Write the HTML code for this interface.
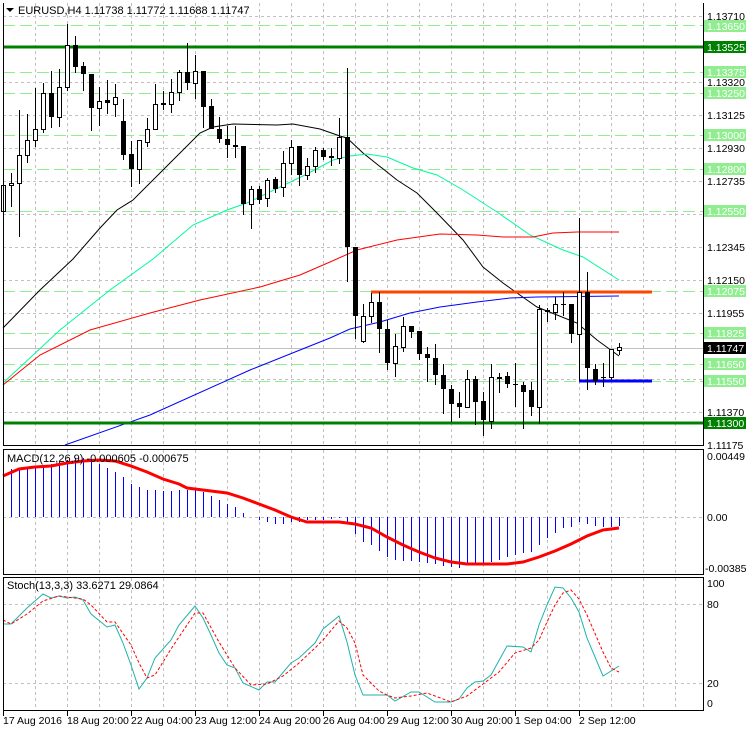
<!DOCTYPE html>
<html><head><meta charset="utf-8"><style>
html,body{margin:0;padding:0;background:#fff;}
svg{display:block;font-family:"Liberation Sans",sans-serif;font-size:11px;}
</style></head><body>
<svg width="746" height="731" viewBox="0 0 746 731" xmlns="http://www.w3.org/2000/svg">
<rect width="746" height="731" fill="#fff"/>
<!-- vertical grid -->
<g stroke="#c0c0c0" stroke-dasharray="3,3" stroke-width="1">
<path d="M35.5 3V445M67.5 3V445M99.5 3V445M131.5 3V445M163.5 3V445M195.5 3V445M227.5 3V445M259.5 3V445M291.5 3V445M323.5 3V445M355.5 3V445M387.5 3V445M419.5 3V445M451.5 3V445M483.5 3V445M515.5 3V445M547.5 3V445M579.5 3V445M611.5 3V445M643.5 3V445M675.5 3V445"/>
<path d="M35.5 450V574M67.5 450V574M99.5 450V574M131.5 450V574M163.5 450V574M195.5 450V574M227.5 450V574M259.5 450V574M291.5 450V574M323.5 450V574M355.5 450V574M387.5 450V574M419.5 450V574M451.5 450V574M483.5 450V574M515.5 450V574M547.5 450V574M579.5 450V574M611.5 450V574M643.5 450V574M675.5 450V574"/>
<path d="M35.5 578V710M67.5 578V710M99.5 578V710M131.5 578V710M163.5 578V710M195.5 578V710M227.5 578V710M259.5 578V710M291.5 578V710M323.5 578V710M355.5 578V710M387.5 578V710M419.5 578V710M451.5 578V710M483.5 578V710M515.5 578V710M547.5 578V710M579.5 578V710M611.5 578V710M643.5 578V710M675.5 578V710"/>
<path d="M3 16.5H703M3 82.5H703M3 115.5H703M3 148.5H703M3 181.5H703M3 214.5H703M3 247.5H703M3 280.5H703M3 313.5H703M3 379.5H703M3 412.5H703"/>
<path d="M3 517.5H703M3 604.5H703M3 683.5H703"/>
</g>
<!-- green dashed levels -->
<g stroke="#90ee90" stroke-dasharray="12,5" stroke-width="1">
<path d="M3 25.5H703M3 72.5H703M3 93.5H703M3 135.5H703M3 169.5H703M3 211.5H703M3 291.5H703M3 333.5H703M3 364.5H703M3 381.5H703"/>
</g>
<line x1="3" y1="348.5" x2="703" y2="348.5" stroke="#c0c0c0"/>
<!-- MAs -->
<g fill="none" stroke-width="1">
<polyline stroke="#000" points="3,328 40,290 73,259 100,228 117,210 133,200 163,170 200,133 213,127 233,124 277,125 293,124 320,129 340,136 347,138 363,153 397,180 417,193 437,213 463,240 483,267 503,283 517,293 537,307 557,315 577,323 597,340 619,356"/>
<polyline stroke="#00fa9a" points="3,383 60,330 110,290 153,259 193,225 227,210 247,203 280,187 307,174 333,160 350,156 367,154 387,157 413,168 437,175 463,190 497,212 530,235 563,250 583,257 619,280"/>
<polyline stroke="#ff0000" points="3,385 40,355 90,330 150,313 200,300 260,287 300,275 330,262 357,250 397,240 440,234 477,235 503,237 533,237 553,233 577,232 619,232"/>
<polyline stroke="#0000ff" points="65,445 150,415 250,370 300,350 330,338 350,329 380,322 410,313 440,307 477,302 510,298 537,297 619,296"/>
</g>
<!-- horizontal thick lines -->
<rect x="3" y="45.5" width="700" height="3" fill="#008000"/>
<rect x="3" y="421.5" width="700" height="3" fill="#008000"/>
<rect x="371" y="290.5" width="281" height="3" fill="#ff4500"/>
<rect x="579" y="379.5" width="73" height="3" fill="#0000ff"/>
<!-- candles -->
<g stroke="#000" stroke-width="1">
<path d="M3.5 171V216M11.5 173V207M19.5 110V237M27.5 114V163M35.5 88V147M43.5 83V133M51.5 71V128M59.5 69V127M67.5 24V91M75.5 36V73M83.5 62V91M91.5 74V131M99.5 87V126M107.5 80V114M115.5 84V117M123.5 99V160M131.5 141V187M139.5 140V184M147.5 118V147M155.5 84V130M163.5 91V110M171.5 79V113M179.5 70V101M187.5 43V90M195.5 55V99M203.5 71V128M211.5 99V129M219.5 117V143M227.5 126V158M235.5 126V158M243.5 146V215M251.5 186V229M259.5 186V204M267.5 178V207M275.5 177V193M283.5 151V197M291.5 140V175M299.5 146V186M307.5 158V180M315.5 147V173M323.5 148V160M331.5 148V166M339.5 118V164M347.5 68V282M355.5 247V339M363.5 304V343M371.5 293V323M379.5 292V353M387.5 320V370M395.5 334V377M403.5 317V352M411.5 326V338M419.5 331V360M427.5 347V382M435.5 344V385M443.5 364V414M451.5 385V422M459.5 392V418M467.5 370V408M475.5 376V425M483.5 392V436M491.5 364V429M499.5 373V393M507.5 372V388M515.5 363V407M523.5 382V429M531.5 382V416M539.5 305V424M547.5 308V322M555.5 297V320M563.5 292V316M571.5 304V343M579.5 218V381M587.5 272V390M595.5 364V385M603.5 363V387M611.5 349V380M619.5 343V355"/>
</g>
<g stroke="#000" stroke-width="1" fill="#fff">
<rect x="1.5" y="185.5" width="4" height="26"/><rect x="9.5" y="183.5" width="4" height="2"/><rect x="17.5" y="155.5" width="4" height="28"/><rect x="25.5" y="140.5" width="4" height="15"/><rect x="33.5" y="129.5" width="4" height="11"/><rect x="41.5" y="93.5" width="4" height="36"/><rect x="57.5" y="87.5" width="4" height="30"/><rect x="65.5" y="45.5" width="4" height="42"/><rect x="97.5" y="101.5" width="4" height="7"/><rect x="113.5" y="97.5" width="4" height="7"/><rect x="137.5" y="140.5" width="4" height="29"/><rect x="145.5" y="129.5" width="4" height="13"/><rect x="153.5" y="104.5" width="4" height="25"/><rect x="169.5" y="92.5" width="4" height="12"/><rect x="177.5" y="72.5" width="4" height="20"/><rect x="193.5" y="71.5" width="4" height="12"/><rect x="249.5" y="189.5" width="4" height="15"/><rect x="265.5" y="180.5" width="4" height="18"/><rect x="281.5" y="163.5" width="4" height="24"/><rect x="289.5" y="147.5" width="4" height="16"/><rect x="305.5" y="166.5" width="4" height="9"/><rect x="313.5" y="150.5" width="4" height="16"/><rect x="337.5" y="137.5" width="4" height="21"/><rect x="361.5" y="316.5" width="4" height="25"/><rect x="369.5" y="302.5" width="4" height="14"/><rect x="393.5" y="346.5" width="4" height="17"/><rect x="401.5" y="326.5" width="4" height="21"/><rect x="465.5" y="379.5" width="4" height="28"/><rect x="489.5" y="377.5" width="4" height="44"/><rect x="537.5" y="309.5" width="4" height="98"/><rect x="553.5" y="304.5" width="4" height="8"/><rect x="577.5" y="292.5" width="4" height="42"/><rect x="609.5" y="349.5" width="4" height="28"/><rect x="617.5" y="347.5" width="4" height="3"/>
</g>
<g fill="#000">
<rect x="49" y="93" width="5" height="24"/><rect x="73" y="45" width="5" height="22"/><rect x="81" y="66" width="5" height="8"/><rect x="89" y="74" width="5" height="34"/><rect x="105" y="100" width="5" height="3"/><rect x="121" y="121" width="5" height="34"/><rect x="129" y="154" width="5" height="15"/><rect x="161" y="103" width="5" height="2"/><rect x="185" y="72" width="5" height="11"/><rect x="201" y="71" width="5" height="36"/><rect x="209" y="106" width="5" height="23"/><rect x="217" y="129" width="5" height="10"/><rect x="225" y="139" width="5" height="6"/><rect x="233" y="145" width="5" height="2"/><rect x="241" y="146" width="5" height="58"/><rect x="257" y="189" width="5" height="11"/><rect x="273" y="179" width="5" height="10"/><rect x="297" y="146" width="5" height="29"/><rect x="321" y="150" width="5" height="7"/><rect x="329" y="156" width="5" height="2"/><rect x="345" y="137" width="5" height="110"/><rect x="353" y="247" width="5" height="69"/><rect x="377" y="302" width="5" height="27"/><rect x="385" y="329" width="5" height="34"/><rect x="409" y="326" width="5" height="6"/><rect x="417" y="331" width="5" height="23"/><rect x="425" y="354" width="5" height="4"/><rect x="433" y="358" width="5" height="17"/><rect x="441" y="375" width="5" height="14"/><rect x="449" y="389" width="5" height="15"/><rect x="457" y="403" width="5" height="4"/><rect x="473" y="379" width="5" height="23"/><rect x="481" y="401" width="5" height="19"/><rect x="497" y="377" width="5" height="2"/><rect x="505" y="376" width="5" height="8"/><rect x="513" y="384" width="5" height="1"/><rect x="521" y="385" width="5" height="7"/><rect x="529" y="390" width="5" height="17"/><rect x="545" y="310" width="5" height="2"/><rect x="561" y="304" width="5" height="1"/><rect x="569" y="304" width="5" height="30"/><rect x="585" y="292" width="5" height="76"/><rect x="593" y="369" width="5" height="12"/><rect x="601" y="377" width="5" height="1"/>
</g>
<!-- MACD histogram -->
<path stroke="#0000ff" stroke-width="1" d="M3.5 517V469M11.5 517V469M19.5 517V468M27.5 517V467M35.5 517V466M43.5 517V465M51.5 517V464M59.5 517V462M67.5 517V460M75.5 517V458M83.5 517V458M91.5 517V460M99.5 517V464M107.5 517V468M115.5 517V472M123.5 517V477M131.5 517V484M139.5 517V487M147.5 517V490M155.5 517V490M163.5 517V491M171.5 517V491M179.5 517V490M187.5 517V490M195.5 517V490M203.5 517V492M211.5 517V496M219.5 517V500M227.5 517V504M235.5 517V507M243.5 517V513M259.5 517V520M267.5 517V522M275.5 517V524M283.5 517V524M291.5 517V522M299.5 517V522M307.5 517V520M315.5 517V520M323.5 517V520M331.5 517V519M339.5 517V518M347.5 517V524M355.5 517V534M363.5 517V542M371.5 517V545M379.5 517V551M387.5 517V557M395.5 517V560M403.5 517V561M411.5 517V561M419.5 517V562M427.5 517V563M435.5 517V564M443.5 517V566M451.5 517V567M459.5 517V568M467.5 517V564M475.5 517V564M483.5 517V564M491.5 517V562M499.5 517V560M507.5 517V557M515.5 517V555M523.5 517V553M531.5 517V552M539.5 517V545M547.5 517V538M555.5 517V533M563.5 517V528M571.5 517V527M579.5 517V522M587.5 517V524M595.5 517V526M603.5 517V527M611.5 517V527M619.5 517V526"/>
<polyline fill="none" stroke="#ff0000" stroke-width="3" points="3,476 19,469 35,467 51,466 67,463 83,461 99,460 115,461 131,466 147,472 163,479 179,484 187,488 203,490 227,493 243,498 259,504 275,510 291,517 307,522 339,522 355,524 371,528 387,537 403,545 419,552 435,558 451,562 467,564 483,564 507,564 523,562 539,557 555,551 571,544 587,536 603,530 619,528"/>
<!-- Stoch -->
<polyline fill="none" stroke="#20b2aa" stroke-width="1" points="3,624 11,624 27,608 43,594 51,598 59,596 67,598 75,597 83,600 91,614 107,627 115,625 123,643 131,665 139,689 147,678 155,658 171,640 179,625 195,606 203,618 211,635 219,653 227,665 235,668 243,683 259,690 267,682 275,682 291,663 299,658 315,643 323,629 339,616 347,642 355,675 363,695 379,695 387,695 395,701 411,692 419,692 435,702 451,702 459,699 467,688 475,682 483,681 491,675 507,646 523,647 531,652 539,625 547,605 555,587 563,588 571,598 579,612 587,638 603,676 619,666"/>
<polyline fill="none" stroke="#ff0000" stroke-width="1" stroke-dasharray="3,2" points="3,620 11,624 27,614 43,601 59,596 75,598 83,599 91,605 107,622 115,622 131,645 139,663 147,678 155,675 171,649 187,625 195,613 203,613 219,642 235,668 251,685 267,684 283,676 299,663 315,648 323,640 339,621 347,628 355,643 363,675 379,691 387,695 395,698 411,696 427,693 451,702 467,696 483,684 499,672 515,653 531,648 539,640 547,622 555,605 563,593 571,590 579,599 587,615 603,652 611,668 619,672"/>
<!-- panel borders -->
<g fill="none" stroke="#000" stroke-width="1">
<path d="M3.5 3V445.5H703.5V3"/>
<rect x="3.5" y="449.5" width="700" height="125"/>
<rect x="3.5" y="577.5" width="700" height="133"/>
</g>
<path stroke="#000" d="M3.5 711V716M67.5 711V716M131.5 711V716M195.5 711V716M259.5 711V716M323.5 711V716M387.5 711V716M451.5 711V716M515.5 711V716M579.5 711V716M703.5 16V17" />
<!-- axis labels -->
<g fill="#000" font-size="10.5">
<text x="707" y="20">1.13710</text><text x="707" y="86">1.13320</text><text x="707" y="119">1.13125</text><text x="707" y="152">1.12930</text><text x="707" y="185">1.12735</text><text x="707" y="251">1.12345</text><text x="707" y="284">1.12150</text><text x="707" y="317">1.11955</text><text x="707" y="416">1.11370</text><text x="707" y="449">1.11175</text>
<text x="707" y="460">0.00449</text><text x="707" y="521">0.00</text><text x="705" y="572">-0.00385</text>
<text x="707" y="587">100</text><text x="707" y="608">80</text><text x="707" y="687">20</text><text x="707" y="707">0</text>
</g>
<g font-size="10.5">
<rect x="704" y="20" width="42" height="12" fill="#90ee90"/><text x="707" y="30" fill="#fff">1.13650</text>
<rect x="704" y="41" width="42" height="12" fill="#008000"/><text x="707" y="51" fill="#fff">1.13525</text>
<rect x="704" y="66" width="42" height="12" fill="#90ee90"/><text x="707" y="76" fill="#fff">1.13375</text>
<rect x="704" y="87" width="42" height="12" fill="#90ee90"/><text x="707" y="97" fill="#fff">1.13250</text>
<rect x="704" y="129" width="42" height="12" fill="#90ee90"/><text x="707" y="139" fill="#fff">1.13000</text>
<rect x="704" y="163" width="42" height="12" fill="#90ee90"/><text x="707" y="173" fill="#fff">1.12800</text>
<rect x="704" y="205" width="42" height="12" fill="#90ee90"/><text x="707" y="215" fill="#fff">1.12550</text>
<rect x="704" y="285" width="42" height="12" fill="#90ee90"/><text x="707" y="295" fill="#fff">1.12075</text>
<rect x="704" y="327" width="42" height="12" fill="#90ee90"/><text x="707" y="337" fill="#fff">1.11825</text>
<rect x="704" y="342" width="42" height="12" fill="#000"/><text x="707" y="352" fill="#fff">1.11747</text>
<rect x="704" y="358" width="42" height="12" fill="#90ee90"/><text x="707" y="368" fill="#fff">1.11650</text>
<rect x="704" y="375" width="42" height="12" fill="#90ee90"/><text x="707" y="385" fill="#fff">1.11550</text>
<rect x="704" y="417" width="42" height="12" fill="#008000"/><text x="707" y="427" fill="#fff">1.11300</text>
</g>
<!-- titles -->
<path d="M6 8h8l-4 4z" fill="#000"/>
<text x="18" y="14" fill="#000">EURUSD,H4  1.11738 1.11772 1.11688 1.11747</text>
<text x="7" y="462" fill="#000">MACD(12,26,9) -0.000605 -0.000675</text>
<text x="7" y="589" fill="#000">Stoch(13,3,3) 33.6271 29.0864</text>
<g fill="#000" font-size="10.5">
<text x="3" y="724">17 Aug 2016</text><text x="67" y="724">18 Aug 20:00</text><text x="131" y="724">22 Aug 04:00</text><text x="195" y="724">23 Aug 12:00</text><text x="259" y="724">24 Aug 20:00</text><text x="323" y="724">26 Aug 04:00</text><text x="387" y="724">29 Aug 12:00</text><text x="451" y="724">30 Aug 20:00</text><text x="515" y="724">1 Sep 04:00</text><text x="579" y="724">2 Sep 12:00</text>
</g>
</svg>
</body></html>
